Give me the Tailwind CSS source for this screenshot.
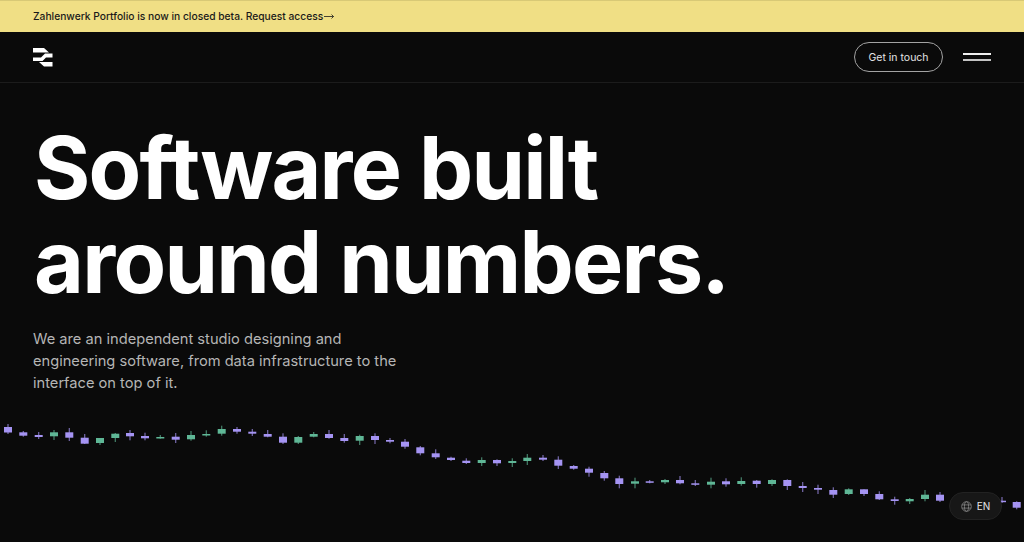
<!DOCTYPE html>
<html lang="en">
<head>
    <meta charset="UTF-8">
    <meta name="viewport" content="width=device-width, initial-scale=1.0">
    <title>Zahlenwerk</title>
    <script src="https://cdn.jsdelivr.net/npm/@tailwindcss/browser@4"></script>
</head>
<body class="bg-[#0a0a0a] font-['Inter',sans-serif] h-[542px] overflow-hidden relative">

    <!-- Announcement bar -->
    <div class="h-[32px] bg-[#f0df85] border-t border-[#d8c976] flex items-center px-[33px] text-[10.25px] font-medium text-[#1a1a1a]">
        <span>Zahlenwerk Portfolio is now in closed beta. Request access</span>
        <svg class="ml-px" width="10" height="7" viewBox="0 0 10 7" fill="none" stroke="#1a1a1a" stroke-width="0.800">
            <path d="M0 3.500h9.500M7.500 1.500l2 2-2 2"/>
        </svg>
    </div>

    <!-- Nav -->
    <header class="h-[51px] border-b border-[#1c1c1c] flex items-center justify-between px-[33px]">
        <svg width="20" height="19" viewBox="0 0 20 19" fill="#ffffff">
            <path d="M0 0H11L16 4.500H0zM12 5.500H19.500V9.500H13L9.500 13H0V9.500H8zM6 14H19.500V18.500H11z"/>
        </svg>
        <div class="flex items-center gap-5">
            <button class="h-[30px] w-[89px] pt-px rounded-full border border-[#a3a3a3] text-[10.5px] text-[#e5e5e5]">Get in touch</button>
            <div class="w-7 flex flex-col gap-[4px]">
                <div class="h-[2px] bg-[#f0f0f0]"></div>
                <div class="h-[2px] bg-[#c4c4c4]"></div>
            </div>
        </div>
    </header>

    <!-- Hero -->
    <main class="px-[33px] pt-[38px]">
        <h1 class="text-[86px] leading-[94px] font-[650] text-white tracking-[-0.02em] ml-px">Software built<br>around numbers.</h1>
        <p class="mt-[19px] text-[14.65px] leading-[22px] text-[#b5b5b5] w-[380px]">We are an independent studio designing and engineering software, from data infrastructure to the interface on top of it.</p>
    </main>

    <!-- Candlestick strip -->
    <svg id="candles" class="absolute left-0 top-0" width="1024" height="542"></svg>

    <!-- Language switcher -->
    <button class="absolute left-[949px] top-[492px] w-[53px] h-[28px] rounded-full bg-[#171717] border border-[#222222] flex items-center justify-center gap-[5px] text-[10px] text-[#e5e5e5]">
        <svg width="11" height="11" viewBox="0 0 24 24" fill="none" stroke="#8f8f8f" stroke-width="1.600">
            <circle cx="12" cy="12" r="10.500"/>
            <ellipse cx="12" cy="12" rx="4.500" ry="10.500"/>
            <path d="M2 8.500h20M2 15.500h20"/>
        </svg>
        <span>EN</span>
    </button>

    <script>
        // [x, wickTop, wickBottom, bodyTop, bodyBottom, up?]
        const candles = [
            [8, 424, 434, 427, 432.5, 0], [23.3, 431, 436.7, 432.3, 435.7, 0], [38.7, 432, 439, 435, 437, 0],
            [54, 430, 440, 432.3, 436.3, 1], [69.3, 428, 441, 432.3, 437.7, 0], [84.7, 434, 444, 437.7, 443.7, 0],
            [100, 438, 445, 438, 443, 1], [115.3, 433, 442, 433.7, 438, 1], [130, 430, 440.3, 433, 436.3, 0],
            [145, 432.7, 440.3, 436, 438.3, 0], [160.3, 435, 438.7, 437, 438, 1], [175.7, 433, 443, 436.7, 439.7, 0],
            [191, 431, 440.7, 435, 439.3, 1], [206.3, 430.3, 436.7, 434, 435, 1], [221.7, 425.7, 435.7, 429, 433.7, 1],
            [237, 427, 433.7, 429, 431.7, 0], [252.3, 429, 436, 431.7, 433.7, 0], [267.7, 430, 437.3, 434, 436.7, 0],
            [283, 433.3, 444, 436.7, 442.7, 0], [298.3, 436, 444, 437, 442.7, 1], [313.7, 432, 437.3, 434, 436.7, 1],
            [329, 430, 438.7, 434, 438, 0], [344.3, 434, 442.7, 438, 441, 0], [359.7, 434.7, 445, 436, 440.7, 1],
            [375, 433.3, 444, 436, 440, 0], [390, 438, 443.3, 440, 441.7, 0], [405, 439, 448.7, 441.7, 446.7, 0],
            [420.3, 446, 455.3, 447.3, 453.3, 0], [435.7, 449.3, 459, 453.3, 457.3, 0], [451, 456.7, 461, 457.7, 460, 0],
            [466.3, 458.3, 464, 460.7, 463, 0], [481.7, 457.3, 466, 460, 463, 1], [497, 459.3, 466, 460, 463.3, 0],
            [512.3, 458.3, 467, 461, 463, 1], [527.3, 454, 465, 457.7, 461, 1], [543, 455, 461, 457.7, 459.7, 0],
            [558.3, 456.3, 469, 459.7, 465.7, 0], [573.7, 465, 469.7, 466, 468.7, 0], [589, 466.7, 476.7, 468.7, 472.7, 0],
            [604.3, 471, 480.7, 473, 478.3, 0], [619.3, 475.7, 488.3, 478.3, 484, 0], [635, 477.7, 488.3, 481.3, 483.7, 1],
            [649.7, 480, 483.3, 481.3, 482.3, 0], [665, 479, 484, 480, 482.3, 1], [680, 476, 484.3, 480, 483.3, 0],
            [695.3, 480, 486, 483.3, 484.7, 0], [711, 477.7, 488.3, 481.7, 484.7, 1], [726, 478.3, 486.7, 481.3, 484.3, 0],
            [741.3, 477.3, 485.7, 481, 484, 1], [756.7, 480, 487.7, 480.7, 484, 0], [772, 479.3, 486, 480, 484, 1],
            [787.3, 479.3, 490, 480, 486, 0], [802.7, 482, 492, 486, 488, 0], [818, 484.7, 494, 488, 489.7, 0],
            [833.3, 487.3, 498, 490, 494.7, 0], [848.7, 488.3, 495, 489.3, 494, 1], [864, 489.3, 496, 489.3, 494, 0],
            [879.3, 491.3, 500, 494, 499.3, 0], [894.7, 496.7, 504.7, 499.3, 501, 0], [909.7, 498, 504, 499, 501.3, 1],
            [925, 490, 501.3, 494.7, 499, 1], [940, 492, 502, 494.7, 500.7, 0], [1002, 497, 503, 500.7, 502, 0],
            [1016.7, 501.3, 509.3, 502, 507.7, 0]
        ];
        const svg = document.getElementById('candles');
        let markup = '';
        candles.forEach(([x, wt, wb, bt, bb, up]) => {
            const color = up ? '#5fb796' : '#a594f3';
            markup += `<rect x="${x - 0.6}" y="${wt}" width="1.2" height="${wb - wt}" fill="${color}" opacity="0.7"/>`;
            markup += `<rect x="${x - 4}" y="${bt}" width="8" height="${Math.max(bb - bt, 1.5)}" fill="${color}"/>`;
        });
        svg.innerHTML = markup;
    </script>
</body>
</html>
